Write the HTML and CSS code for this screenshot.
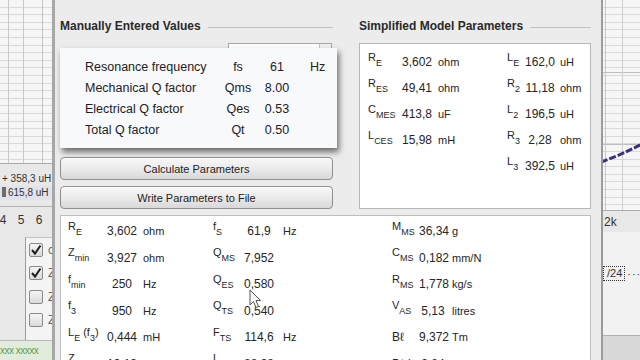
FILE: index.html
```html
<!DOCTYPE html>
<html>
<head>
<meta charset="utf-8">
<link rel="stylesheet" href="styles.css">
</head>
<body>
<div class="screen">
  <div class="bg-left">
    <div class="lchart"></div>
    <div class="legend">
      <div class="lrow">+ 358,3 uH</div>
      <div class="lrow hl"><span class="mark"></span>615,8 uH</div>
    </div>
    <div class="axis"><span>4</span><span>5</span><span>6</span><span>7</span></div>
    <div class="checks">
      <div class="cgap"></div>
      <div class="cpanel">
        <div class="crow"><span class="cb"><svg width="12" height="12" viewBox="0 0 12 12"><path d="M2 6 L5 9.5 L10.5 1.5" fill="none" stroke="#1e1e1e" stroke-width="2"/></svg></span><span>c</span></div>
        <div class="crow"><span class="cb"><svg width="12" height="12" viewBox="0 0 12 12"><path d="M2 6 L5 9.5 L10.5 1.5" fill="none" stroke="#1e1e1e" stroke-width="2"/></svg></span><span>Z</span></div>
        <div class="crow"><span class="cb"></span><span>Z</span></div>
        <div class="crow"><span class="cb"></span><span>Z</span></div>
      </div>
    </div>
    <div class="green">xxx xxxxx</div>
  </div>

  <div class="dialog">
    <div class="top">
      <div class="col">
        <div class="gh">Manually Entered Values</div>
        <div class="fields">
          <div class="combo"><span class="spin"></span></div>
        </div>
        <div class="btn">Calculate Parameters</div>
        <div class="btn">Write Parameters to File</div>
      </div>
      <div class="col">
        <div class="gh">Simplified Model Parameters</div>
        <div class="mpanel">
          <span class="sy">R<sub>E</sub></span><span class="v">3,602</span><span class="u">ohm</span>
          <span class="sy">L<sub>E</sub></span><span class="v">162,0</span><span class="u">uH</span>

          <span class="sy">R<sub>ES</sub></span><span class="v">49,41</span><span class="u">ohm</span>
          <span class="sy">R<sub>2</sub></span><span class="v">11,18</span><span class="u">ohm</span>

          <span class="sy">C<sub>MES</sub></span><span class="v">413,8</span><span class="u">uF</span>
          <span class="sy">L<sub>2</sub></span><span class="v">196,5</span><span class="u">uH</span>

          <span class="sy">L<sub>CES</sub></span><span class="v">15,98</span><span class="u">mH</span>
          <span class="sy">R<sub>3</sub></span><span class="v">2,28</span><span class="u">ohm</span>

          <span></span><span></span><span></span>
          <span class="sy">L<sub>3</sub></span><span class="v">392,5</span><span class="u">uH</span>
        </div>
      </div>
    </div>

    <div class="lower">
      <span class="sy">R<sub>E</sub></span><span class="v">3,602</span><span class="u">ohm</span>
      <span class="sy">f<sub>S</sub></span><span class="v">61,9</span><span class="u">Hz</span>
      <span class="sy">M<sub>MS</sub></span><span class="v">36,34</span><span class="u">g</span>

      <span class="sy">Z<sub>min</sub></span><span class="v">3,927</span><span class="u">ohm</span>
      <span class="sy">Q<sub>MS</sub></span><span class="v">7,952</span><span class="u"></span>
      <span class="sy">C<sub>MS</sub></span><span class="v">0,182</span><span class="u">mm/N</span>

      <span class="sy">f<sub>min</sub></span><span class="v">250</span><span class="u">Hz</span>
      <span class="sy">Q<sub>ES</sub></span><span class="v">0,580</span><span class="u"></span>
      <span class="sy">R<sub>MS</sub></span><span class="v">1,778</span><span class="u">kg/s</span>

      <span class="sy">f<sub>3</sub></span><span class="v">950</span><span class="u">Hz</span>
      <span class="sy">Q<sub>TS</sub></span><span class="v">0,540</span><span class="u"></span>
      <span class="sy">V<sub>AS</sub></span><span class="v">5,13</span><span class="u">litres</span>

      <span class="sy">L<sub>E</sub> (f<sub>3</sub>)</span><span class="v">0,444</span><span class="u">mH</span>
      <span class="sy">F<sub>TS</sub></span><span class="v">114,6</span><span class="u">Hz</span>
      <span class="pl">Bℓ</span><span class="v">9,372</span><span class="u">Tm</span>

      <span class="sy">Z<sub>max</sub></span><span class="v">13,13</span><span class="u">ohm</span>
      <span class="sy">L<sub>p</sub></span><span class="v">88,38</span><span class="u">dB(1W/1m)</span>
      <span class="pl">Bℓ·i</span><span class="v">0,84</span><span class="u">N</span>
    </div>
  </div>

  <div class="bg-right">
    <div class="rchart">
      <svg class="curve" width="37" height="210" viewBox="0 0 37 210"><path d="M-2 162 Q18 155 39 144" fill="none" stroke="#3a3180" stroke-width="3" stroke-dasharray="7 2"/></svg>
    </div>
    <div class="raxis">2k</div>
    <div class="rpanel">
      <div class="tagrow"><span class="tag">/24</span><span class="dots">···</span></div>
    </div>
    <div class="rbottom"></div>
  </div>

  <div class="popup">
    <span>Resonance frequency</span><span class="c">fs</span><span class="c">61</span><span>Hz</span>
    <span>Mechanical Q factor</span><span class="c">Qms</span><span class="c">8.00</span><span></span>
    <span>Electrical Q factor</span><span class="c">Qes</span><span class="c">0.53</span><span></span>
    <span>Total Q factor</span><span class="c">Qt</span><span class="c">0.50</span><span></span>
  </div>

  <svg class="cursor" width="14" height="20" viewBox="0 0 14 20"><path d="M1 1 L1 16 L4.5 12.5 L7 18.5 L9.5 17.5 L7 11.5 L11.5 11.5 Z" fill="#fafafa" stroke="#555" stroke-width="1" stroke-linejoin="round"/></svg>
</div>
</body>
</html>
```

FILE: styles.css
```css
* { box-sizing: border-box; margin: 0; padding: 0; }
html, body { width: 640px; height: 360px; overflow: hidden; }
body { font-family: "Liberation Sans", Arial, sans-serif; color: #262626; background: #ececec; }

.screen { position: relative; display: flex; width: 640px; height: 360px; overflow: hidden; }

/* ---------- left background window ---------- */
.bg-left { width: 52px; flex: none; display: flex; flex-direction: column; background: #e8e8e8; overflow: hidden; }
.lchart {
  height: 164px; flex: none; border-bottom: 1px solid #a9a9a9; background-color: #f6f6f6;
  background-image:
    linear-gradient(to right, transparent 8px, #c9c9c9 8px, #c9c9c9 9px, transparent 9px),
    linear-gradient(to right, transparent 23px, #c9c9c9 23px, #c9c9c9 24px, transparent 24px),
    linear-gradient(to right, transparent 42px, #c2c2c2 42px, #c2c2c2 43px, transparent 43px),
    repeating-linear-gradient(to bottom, transparent 0 6.6px, #d9d9d9 6.6px 7.6px);
}
.legend { height: 43px; flex: none; padding-top: 8px; border-bottom: 1px solid #b4b4b4; font-size: 10px; color: #333; white-space: nowrap; }
.lrow { height: 14px; line-height: 14px; padding-left: 2px; }
.lrow.hl { background: #e2e2ea; }
.mark { display: inline-block; width: 4px; height: 10px; background: #6d6d6d; vertical-align: -1px; margin-right: 2px; }
.axis { height: 25px; flex: none; display: flex; align-items: center; margin-left: -6px; font-size: 12px; color: #333; }
.axis span { width: 18px; text-align: center; flex: none; }
.checks { height: 108px; flex: none; display: flex; }
.cgap { width: 25px; flex: none; }
.cpanel { flex: 1; margin-top: 5px; border-left: 1px solid #9d9d9d; border-top: 1px solid #c4c4c4; background: #f4f4f4; padding-left: 3px; }
.crow { height: 23.5px; display: flex; align-items: center; gap: 5px; font-size: 12px; color: #666; white-space: nowrap; }
.cb { width: 14px; height: 14px; flex: none; border: 1px solid #8a8a8a; border-radius: 2px; background: linear-gradient(#f6f6f6, #dadada); display: flex; align-items: center; justify-content: center; }
.green { flex: 1; border-top: 1px solid #b9b9b9; background: #e2ecda; color: #5e9c55; font-size: 10px; letter-spacing: -0.5px; padding-top: 4px; white-space: nowrap; }

/* ---------- dialog ---------- */
.dialog { width: 551px; flex: none; border-left: 3px solid #a7a7a7; border-right: 2px solid #9a9a9a; background: #ececec; padding: 18px 10px 0 5px; display: flex; flex-direction: column; }
.top { display: grid; grid-template-columns: 273px 1fr; column-gap: 26px; }
.col { display: flex; flex-direction: column; }
.gh { display: flex; align-items: center; height: 16px; font-weight: bold; font-size: 12px; color: #2a2a2a; white-space: nowrap; }
.gh::after { content: ""; flex: 1; height: 1px; background: #c0c0c0; margin-left: 7px; margin-top: 2px; }
.fields { height: 123px; padding-top: 9px; padding-left: 168px; }
.combo { width: 104px; height: 20px; border: 1px solid #a8a8a8; background: #fff; display: flex; justify-content: flex-end; }
.spin { width: 12px; border-left: 1px solid #c4c4c4; background: #f0f0f0; }
.btn { height: 23px; border: 1px solid #8f8f8f; border-radius: 4px; background: linear-gradient(#f8f8f8, #ebebeb 50%, #d8d8d8); box-shadow: inset 0 1px 0 #fff; font-size: 11px; color: #222; display: flex; align-items: center; justify-content: center; }
.btn + .btn { margin-top: 6px; }

.sy, .pl { white-space: nowrap; font-size: 11px; line-height: 14px; margin-bottom: 5px; }
.pl { margin-bottom: 0; font-size: 12px; }
.sy sub { font-size: 9px; vertical-align: -5px; line-height: 14px; }
.v { font-size: 12px; text-align: center; white-space: nowrap; }
.u { font-size: 11px; white-space: nowrap; }

.mpanel {
  margin-top: 9px; height: 166px; background: #fff; border: 1px solid #b7b7b7;
  padding: 5px 0 0 8px;
  display: grid; grid-template-columns: 32px 34px 73px 18px 30px 1fr; grid-auto-rows: 26px; align-items: center;
}
.mpanel > span:nth-child(6n+3) { padding-left: 4px; }
.mpanel > span:nth-child(6n) { padding-left: 5px; }

.lower {
  margin-top: 6px; flex: 1; background: #fff; border: 1px solid #bdbdbd; border-bottom: none;
  padding: 2px 0 0 7px;
  display: grid; grid-template-columns: 36px 36px 73px 30px 32px 117px 27px 28px 1fr; grid-auto-rows: 26.5px; align-items: center;
}
.lower > span:nth-child(9n+3) { padding-left: 3px; }
.lower > span:nth-child(9n+6) { padding-left: 8px; }
.lower > span:nth-child(9n) { padding-left: 5px; }

/* ---------- right background window ---------- */
.bg-right { flex: 1; display: flex; flex-direction: column; overflow: hidden; background: #e8e8e8; }
.rchart {
  height: 210px; flex: none; position: relative; background-color: #f6f6f6;
  background-image:
    linear-gradient(to right, transparent 2px, #c8c8c8 2px, #c8c8c8 3px, transparent 3px),
    linear-gradient(to right, transparent 19px, #d0d0d0 19px, #d0d0d0 20px, transparent 20px),
    linear-gradient(to bottom, transparent 72px, #bdbdbd 72px, #bdbdbd 73px, transparent 73px),
    linear-gradient(to bottom, transparent 144px, #bdbdbd 144px, #bdbdbd 145px, transparent 145px),
    repeating-linear-gradient(to bottom, transparent 0 6.6px, #dadada 6.6px 7.6px);
}
.curve { position: absolute; left: 0; top: 0; }
.raxis { height: 22px; flex: none; border-top: 1px solid #acacac; font-size: 12px; color: #333; display: flex; align-items: center; padding-left: 1px; }
.rpanel { height: 103px; flex: none; background: #f2f2f2; padding-top: 34px; }
.tagrow { display: flex; align-items: center; font-size: 11px; color: #333; white-space: nowrap; }
.tag { border: 1px dotted #333; padding: 0 2px 0 3px; line-height: 13px; }
.dots { margin-left: 2px; letter-spacing: 1px; }
.rbottom { flex: 1; border-top: 1px solid #b0b0b0; background: #d8d8d8; }

/* ---------- overlays ---------- */
.popup {
  position: absolute; left: 60px; top: 48px; width: 277px; height: 100px;
  background: #f8f9fb; box-shadow: 2px 4px 6px rgba(0, 0, 0, 0.55);
  padding: 8px 0 0 25px;
  display: grid; grid-template-columns: 133px 40px 38px 1fr; grid-auto-rows: 21px; align-items: center;
  font-size: 12.5px; color: #222; white-space: nowrap;
}
.popup .c { text-align: center; }
.popup > span:nth-child(4n) { padding-left: 14px; }
.cursor { position: absolute; left: 249px; top: 289px; }
```
